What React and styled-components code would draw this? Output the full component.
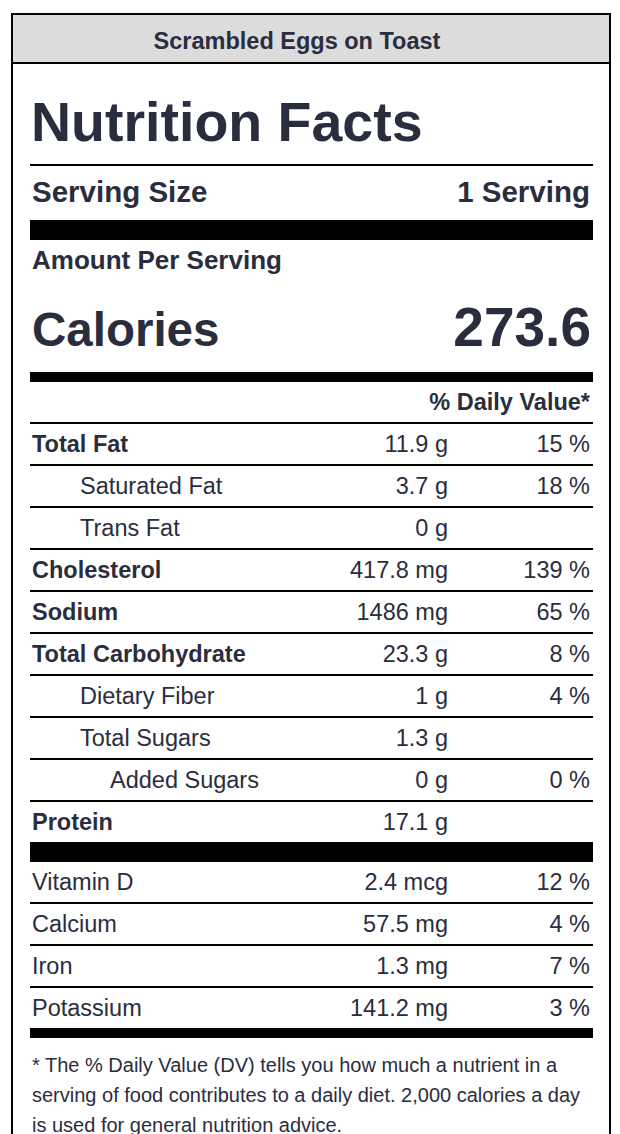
import React from "react";
import styled, { createGlobalStyle } from "styled-components";

const GlobalStyle = createGlobalStyle`
  body {
    margin: 0;
    background: #fff;
    font-family: "Liberation Sans", Arial, Helvetica, sans-serif;
    color: #2a2d3e;
  }
`;

const nutrients = [
  { label: "Total Fat", amount: "11.9 g", dv: "15 %", bold: true },
  { label: "Saturated Fat", amount: "3.7 g", dv: "18 %", indent: 1 },
  { label: "Trans Fat", amount: "0 g", indent: 1 },
  { label: "Cholesterol", amount: "417.8 mg", dv: "139 %", bold: true },
  { label: "Sodium", amount: "1486 mg", dv: "65 %", bold: true },
  { label: "Total Carbohydrate", amount: "23.3 g", dv: "8 %", bold: true },
  { label: "Dietary Fiber", amount: "1 g", dv: "4 %", indent: 1 },
  { label: "Total Sugars", amount: "1.3 g", indent: 1 },
  { label: "Added Sugars", amount: "0 g", dv: "0 %", indent: 2 },
  { label: "Protein", amount: "17.1 g", bold: true },
];

const vitamins = [
  { label: "Vitamin D", amount: "2.4 mcg", dv: "12 %" },
  { label: "Calcium", amount: "57.5 mg", dv: "4 %" },
  { label: "Iron", amount: "1.3 mg", dv: "7 %" },
  { label: "Potassium", amount: "141.2 mg", dv: "3 %" },
];

const indents = [0, 48, 78];

function App() {
  return (
    <>
      <GlobalStyle />
      <Label>
        <Header>Scrambled Eggs on Toast</Header>
        <Body>
          <Title>Nutrition Facts</Title>
          <ServingRow>
            <span>Serving Size</span>
            <span>1 Serving</span>
          </ServingRow>
          <Bar size={20} />
          <AmountPer>Amount Per Serving</AmountPer>
          <CaloriesRow>
            <CaloriesLabel>Calories</CaloriesLabel>
            <CaloriesValue>273.6</CaloriesValue>
          </CaloriesRow>
          <Bar size={10} />
          <DailyHead>% Daily Value*</DailyHead>
          {nutrients.map((n) => (
            <Row key={n.label} divided>
              <Name bold={n.bold} indent={indents[n.indent || 0]}>
                {n.label}
              </Name>
              <Amount>{n.amount}</Amount>
              <Percent>{n.dv}</Percent>
            </Row>
          ))}
          <Bar size={20} />
          {vitamins.map((v, i) => (
            <Row key={v.label} divided={i > 0}>
              <Name indent={0}>{v.label}</Name>
              <Amount>{v.amount}</Amount>
              <Percent>{v.dv}</Percent>
            </Row>
          ))}
          <Bar size={10} />
          <Footnote>
            * The % Daily Value (DV) tells you how much a nutrient in a serving
            of food contributes to a daily diet. 2,000 calories a day is used
            for general nutrition advice.
          </Footnote>
        </Body>
      </Label>
    </>
  );
}

export default App;

const Label = styled.div`
  width: 600px;
  box-sizing: border-box;
  margin: 13px 0 0 11px;
  border: 2px solid #000;
  background: #fff;
`;

const Header = styled.div`
  height: 49px;
  box-sizing: border-box;
  padding: 5px 28px 0 0;
  border-bottom: 2px solid #000;
  background: #dcdcdc;
  display: flex;
  align-items: center;
  justify-content: center;
  font-size: 23.5px;
  font-weight: 700;
`;

const Body = styled.div`
  padding: 0 16px 30px 17px;
`;

const Title = styled.h1`
  margin: 30px 0 0;
  font-size: 55.5px;
  line-height: 56px;
  font-weight: 700;
  padding: 0 0 14px 1px;
  border-bottom: 2px solid #000;
`;

const ServingRow = styled.div`
  display: flex;
  justify-content: space-between;
  height: 54px;
  box-sizing: border-box;
  padding: 0 3px 3px 2px;
  line-height: 51px;
  font-size: 29.5px;
  font-weight: 700;
`;

const Bar = styled.div`
  height: ${(props) => props.size}px;
  background: #000;
`;

const AmountPer = styled.div`
  font-size: 26px;
  font-weight: 700;
  line-height: 40px;
  padding-left: 2px;
`;

const CaloriesRow = styled.div`
  display: flex;
  justify-content: space-between;
  align-items: baseline;
  height: 92px;
  box-sizing: border-box;
  padding: 3px 2px 0 2px;
  font-weight: 700;
`;

const CaloriesLabel = styled.span`
  font-size: 47.5px;
  line-height: 89px;
`;

const CaloriesValue = styled.span`
  font-size: 55px;
  line-height: 89px;
`;

const DailyHead = styled.div`
  text-align: right;
  font-size: 23.5px;
  font-weight: 700;
  line-height: 40px;
  padding-right: 3px;
`;

const Row = styled.div`
  display: grid;
  grid-template-columns: 1fr 180px 143px;
  align-items: center;
  height: 40px;
  line-height: 40px;
  font-size: 23.5px;
  border-top: ${(props) => (props.divided ? "2px solid #000" : "none")};
`;

const Name = styled.span`
  font-weight: ${(props) => (props.bold ? 700 : 400)};
  padding-left: ${(props) => props.indent + 2}px;
  white-space: nowrap;
`;

const Amount = styled.span`
  text-align: right;
  padding-right: 2px;
`;

const Percent = styled.span`
  text-align: right;
  padding-right: 3px;
`;

const Footnote = styled.p`
  margin: 0;
  padding: 12px 0 0 2px;
  font-size: 20px;
  line-height: 30px;
`;
